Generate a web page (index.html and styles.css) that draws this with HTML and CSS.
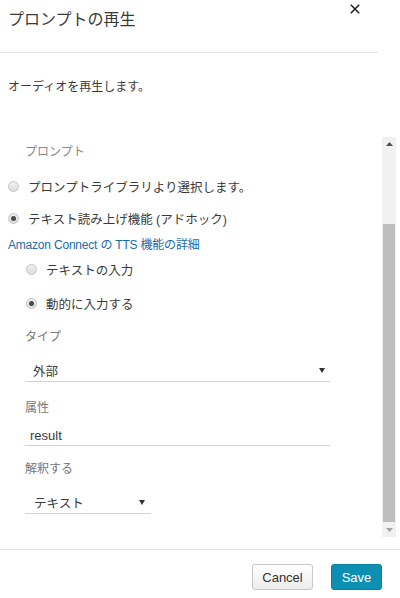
FILE: index.html
```html
<!DOCTYPE html>
<html lang="ja">
<head>
<meta charset="utf-8">
<title>プロンプトの再生</title>
<link rel="stylesheet" href="styles.css">
</head>
<body>
<div class="dialog">
  <header class="header">
    <h1 class="title">プロンプトの再生</h1>
    <button class="close" aria-label="close">
      <svg width="10" height="10" viewBox="0 0 10 10"><path d="M0.8 0.8 L9.2 9.2 M9.2 0.8 L0.8 9.2" stroke="#1e1e1e" stroke-width="1.5" fill="none"/></svg>
    </button>
  </header>
  <p class="desc">オーディオを再生します。</p>
  <div class="scroll">
    <div class="scroll-content">
      <div class="section-label">プロンプト</div>
      <label class="radio-row r1"><span class="radio"></span><span>プロンプトライブラリより選択します。</span></label>
      <label class="radio-row r2"><span class="radio checked"></span><span>テキスト読み上げ機能 (アドホック)</span></label>
      <a class="link" href="#">Amazon Connect の TTS 機能の詳細</a>
      <div class="sub">
        <label class="radio-row r3"><span class="radio"></span><span>テキストの入力</span></label>
        <label class="radio-row r4"><span class="radio checked"></span><span>動的に入力する</span></label>
      </div>
      <div class="fields">
        <div class="field-label l1">タイプ</div>
        <div class="select wide"><span>外部</span><svg class="caret" width="6" height="5" viewBox="0 0 6 5"><path d="M0 0 H6 L3 5 Z" fill="#333"/></svg></div>
        <div class="field-label l2">属性</div>
        <div class="input">result</div>
        <div class="field-label l3">解釈する</div>
        <div class="select narrow"><span>テキスト</span><svg class="caret" width="6" height="5" viewBox="0 0 6 5"><path d="M0 0 H6 L3 5 Z" fill="#333"/></svg></div>
      </div>
    </div>
    <div class="scrollbar">
      <div class="sb-btn"><svg width="7" height="4" viewBox="0 0 7 4"><path d="M0 4 L3.5 0 L7 4 Z" fill="#505050"/></svg></div>
      <div class="sb-track">
        <div class="sb-space"></div>
        <div class="sb-thumb"></div>
      </div>
      <div class="sb-btn down"><svg width="7" height="4" viewBox="0 0 7 4"><path d="M0 0 L7 0 L3.5 4 Z" fill="#a3a3a3"/></svg></div>
    </div>
  </div>
  <footer class="footer">
    <button class="btn">Cancel</button>
    <button class="btn primary">Save</button>
  </footer>
</div>
</body>
</html>
```
FILE: styles.css
```css
* { box-sizing: border-box; }
html, body { margin: 0; padding: 0; }
body {
  width: 400px;
  height: 598px;
  overflow: hidden;
  background: #fff;
  font-family: "Liberation Sans", "Noto Sans CJK JP", sans-serif;
  color: #3a3a3a;
  font-size: 12px;
}
.dialog { width: 400px; height: 598px; display: flex; flex-direction: column; }

.header {
  width: 378px;
  height: 53px;
  border-bottom: 1px solid #e6e6e6;
  display: flex;
  align-items: flex-start;
}
.title {
  margin: 10px 0 0 8px;
  font-size: 16px;
  line-height: 20px;
  font-weight: normal;
  color: #3a3a3a;
}
.close {
  margin: 4px 18px 0 auto;
  padding: 0;
  border: 0;
  background: none;
  width: 10px;
  height: 10px;
  display: block;
}
.close svg { display: block; }

.desc {
  margin: 26px 0 42px 8px;
  font-size: 12px;
  line-height: 16px;
  color: #3a3a3a;
}

.scroll {
  height: 400px;
  display: flex;
}
.scroll-content {
  width: 382px;
  overflow: hidden;
  display: flex;
  flex-direction: column;
  padding-left: 8px;
}
.section-label {
  margin: 7px 0 0 17px;
  height: 16px;
  line-height: 16px;
  color: #8a8a8a;
  font-size: 12px;
}
.radio-row {
  display: flex;
  align-items: center;
  height: 20px;
  gap: 9px;
  font-size: 12.5px;
  color: #3a3a3a;
}
.r1 { margin-top: 16px; }
.r2 { margin-top: 12px; }
.radio {
  width: 11px;
  height: 11px;
  border-radius: 50%;
  border: 1px solid #c4c4c4;
  background: linear-gradient(#f0f0f0, #dcdcdc);
  display: flex;
  align-items: center;
  justify-content: center;
  flex: none;
}
.radio.checked::after {
  content: "";
  width: 5px;
  height: 5px;
  border-radius: 50%;
  background: #4a4a4a;
}
.link {
  margin-top: 9px;
  height: 16px;
  line-height: 16px;
  color: #1b6aa8;
  text-decoration: none;
  font-size: 12px;
  letter-spacing: -0.2px;
}
.sub { padding-left: 18px; display: flex; flex-direction: column; }
.r3 { margin-top: 6px; }
.r4 { margin-top: 14px; }

.fields { padding-left: 17px; width: 339px; display: flex; flex-direction: column; }
.field-label {
  height: 16px;
  line-height: 16px;
  color: #777;
  font-size: 12px;
}
.l1 { margin-top: 16px; }
.l2 { margin-top: 18px; }
.l3 { margin-top: 15px; }
.select {
  margin-top: 15px;
  height: 22px;
  border-bottom: 1px solid #d4d4d4;
  display: flex;
  align-items: center;
  justify-content: space-between;
  padding: 0 5px 0 8px;
  font-size: 12.5px;
  color: #3a3a3a;
}
.select.wide { width: 305px; }
.select.narrow { width: 126px; padding-left: 9px; padding-right: 6px; margin-top: 15px; }
.caret { display: block; }
.input {
  margin-top: 10px;
  height: 20px;
  line-height: 19px;
  border-bottom: 1px solid #d4d4d4;
  width: 305px;
  padding-left: 5px;
  font-size: 13px;
  color: #3a3a3a;
}

.scrollbar {
  width: 14px;
  height: 400px;
  background: #f1f1f1;
  display: flex;
  flex-direction: column;
}
.sb-btn {
  height: 14px;
  display: flex;
  align-items: center;
  justify-content: center;
  flex: none;
}
.sb-btn svg { display: block; }
.sb-track { flex: 1; display: flex; flex-direction: column; align-items: center; }
.sb-space { height: 73px; flex: none; }
.sb-thumb { width: 12px; height: 298px; background: #bdbdbd; }

.footer {
  margin-top: 12px;
  border-top: 1px solid #e6e6e6;
  padding: 14px 18px 0 0;
  display: flex;
  justify-content: flex-end;
  gap: 18px;
}
.btn {
  height: 26px;
  border-radius: 3px;
  font-family: "Liberation Sans", Arial, sans-serif;
  font-size: 13px;
  padding: 0;
  cursor: pointer;
}
.btn:first-child {
  width: 61px;
  border: 1px solid #c8c8c8;
  background: linear-gradient(#ffffff, #ececec);
  color: #333;
}
.btn.primary {
  width: 51px;
  border: 1px solid #0a7f9e;
  background: #0d8fb2;
  color: #fff;
}
```
